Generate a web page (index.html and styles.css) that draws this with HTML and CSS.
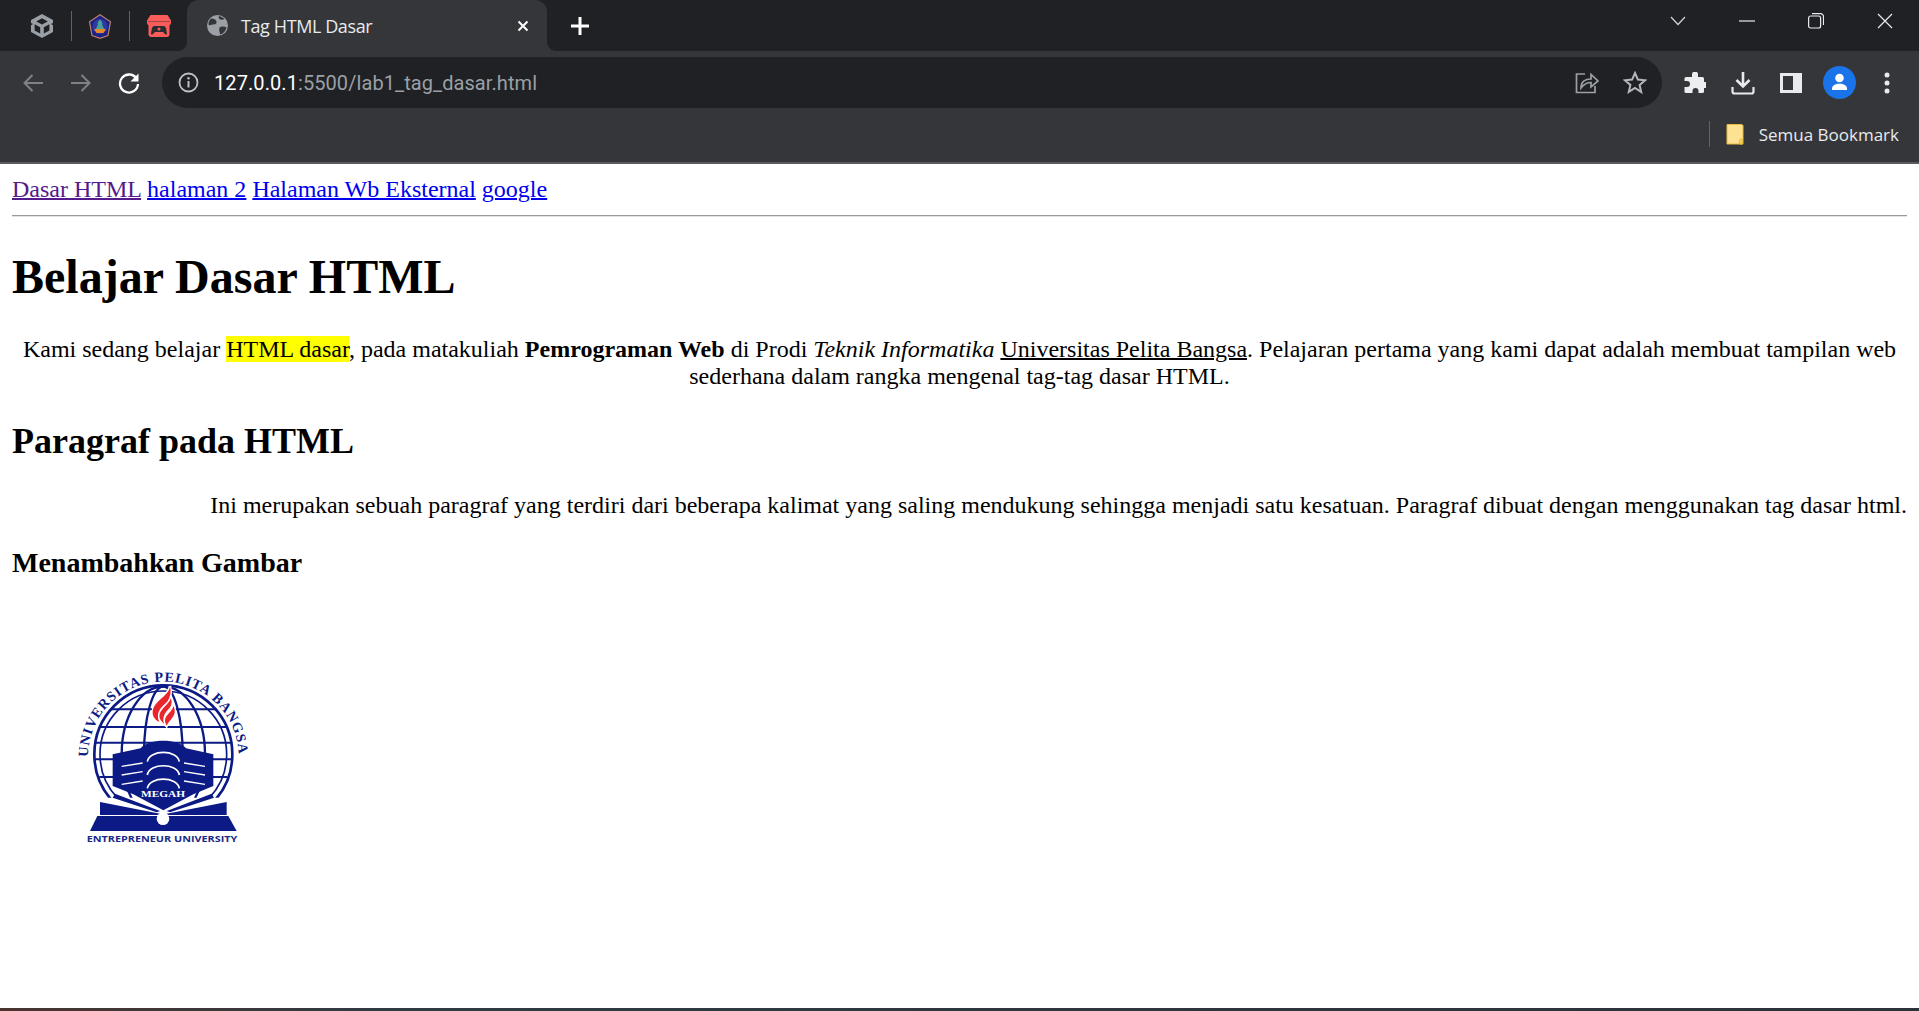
FILE: index.html

```html
<!DOCTYPE html>
<html lang="en">
<head>
    <meta charset="UTF-8">
    <title>Tag HTML Dasar</title>
    <link rel="stylesheet" href="styles.css">
</head>
<body>
<div class="window">
    <div class="tabstrip">
        <div class="pinned sep">
            <svg width="22" height="24" viewBox="0 0 22 24"><path d="M11 0l11 6v12l-11 6L0 18V6z" fill="#9aa0a6"/><path d="M11 4.200l5.800 3.200L11 10.600 5.200 7.400zM3.600 10.200l5.600 3.100v6.200l-5.600-3zM18.400 10.200v6.300l-5.600 3v-6.200z" fill="#202124"/><path d="M-1 8.500l3 1.500-3 2zM23 8.500l-3 1.500 3 2z" fill="#202124"/></svg>
        </div>
        <div class="pinned sep">
            <svg width="24" height="25" viewBox="0 0 24 25"><path d="M12 .7l10.500 7L20 21.500 12 24.300 4 21.500 1.500 7.700z" fill="#1c2186" stroke="#b9806c" stroke-width="1.200"/><circle cx="12" cy="12.500" r="7.500" fill="#2c3aa0"/><path d="M12 5.500c1.800 1.500 2.800 3.500 2.200 5.500l2 4H7.800l2-4C9.200 9 10.200 7 12 5.500z" fill="#4a9f98"/><path d="M6 15h12l-2.500 4h-7z" fill="#e8862a"/></svg>
        </div>
        <div class="pinned pinned-last">
            <svg width="24" height="22" viewBox="0 0 24 22"><path d="M3.500 0h17L24 5.500V8a2.500 2.500 0 0 1-1.500 2.200V19a3 3 0 0 1-3 3h-15a3 3 0 0 1-3-3v-8.800A2.500 2.500 0 0 1 0 8V5.500z" fill="#fa5c5c"/><path d="M1 6.500h22" stroke="#35272a" stroke-width=".8" opacity=".55"/><path d="M7.500 11h9c1.500 0 2.300 1 2.600 2.500l.9 5c.1 1-1 1.400-1.800.7L16 17H8l-2.200 2.200c-.8.700-1.900.3-1.800-.7l.9-5C5.200 12 6 11 7.500 11z" fill="#2b2d30"/><circle cx="12" cy="14" r="1.500" fill="#fa5c5c"/></svg>
        </div>
        <div class="tab">
            <svg class="tab-icon" width="21" height="21" viewBox="0 0 21 21"><circle cx="10.500" cy="10.500" r="10.500" fill="#9aa0a6"/><path d="M4 3.500c3 0 5 1 5.500 3S8 10 6 9.500 2 12 1.500 9C1.500 7 2.500 5 4 3.500zM13 12c2-1 5-.5 6.500.5-.5 3-3 6-6 7-1-2-2-5.500-.5-7.500zM12 1c2 .5 4 1.500 5.500 3-1.500 1-4 1-5 0S11.500 2 12 1z" fill="#35363a"/></svg>
            <span class="tab-title">Tag HTML Dasar</span>
            <svg class="tab-close" width="12" height="12" viewBox="0 0 12 12"><path d="M1.500 1.500l9 9M10.500 1.500l-9 9" stroke="#fff" stroke-width="2"/></svg>
        </div>
        <svg class="new-tab" width="18" height="18" viewBox="0 0 18 18"><path d="M9 0v18M0 9h18" stroke="#fff" stroke-width="3"/></svg>
        <div class="win-controls">
            <span class="win-btn"><svg width="16" height="10" viewBox="0 0 16 10"><path d="M1 1l7 7.500L15 1" fill="none" stroke="#d5d6d8" stroke-width="1.200"/></svg></span>
            <span class="win-btn"><svg width="16" height="2" viewBox="0 0 16 2"><path d="M0 1h16" stroke="#e8eaed" stroke-width="1.200"/></svg></span>
            <span class="win-btn"><svg width="16" height="16" viewBox="0 0 16 16"><rect x=".6" y="3" width="12" height="12" rx="2" fill="none" stroke="#e8eaed" stroke-width="1.200"/><path d="M4 .7h8.500a3 3 0 0 1 3 3V12" fill="none" stroke="#e8eaed" stroke-width="1.200"/></svg></span>
            <span class="win-btn"><svg width="16" height="16" viewBox="0 0 16 16"><path d="M1 1l14 14M15 1L1 15" stroke="#e8eaed" stroke-width="1.200"/></svg></span>
        </div>
    </div>

    <div class="toolbar">
        <span class="tool"><svg width="22" height="20" viewBox="0 0 22 20"><path d="M21 10H3M10.500 2l-8 8 8 8" fill="none" stroke="#7e8185" stroke-width="2"/></svg></span>
        <span class="tool"><svg width="22" height="20" viewBox="0 0 22 20"><path d="M1 10h18M11.500 2l8 8-8 8" fill="none" stroke="#7e8185" stroke-width="2"/></svg></span>
        <span class="tool"><svg width="22" height="22" viewBox="0 0 22 22"><path d="M18.500 6.500A9 9 0 1 0 20 12" fill="none" stroke="#fff" stroke-width="2.300"/><path d="M20.500 1.500v8h-8z" fill="#fff"/></svg></span>
        <div class="omnibox">
            <svg class="info" width="21" height="21" viewBox="0 0 21 21"><circle cx="10.500" cy="10.500" r="9" fill="none" stroke="#bdc1c6" stroke-width="1.800"/><path d="M10.500 9v6.500" stroke="#bdc1c6" stroke-width="2"/><circle cx="10.500" cy="6.300" r="1.200" fill="#bdc1c6"/></svg>
            <span class="url"><span class="host">127.0.0.1</span>:5500/lab1_tag_dasar.html</span>
            <span class="tool share"><svg width="24" height="23" viewBox="0 0 24 23"><path d="M10 3H1.500v18.500H20V15" fill="none" stroke="#9aa0a6" stroke-width="1.700"/><path d="M6 17c0-6 4-9 10-9V3.500l7 6.500-7 6v-4.500c-4 0-7 1.500-10 5.500z" fill="#202124" stroke="#9aa0a6" stroke-width="1.700"/></svg></span>
            <span class="tool"><svg width="24" height="23" viewBox="0 0 24 23"><path d="M12 2l2.900 6.600 7.100.7-5.400 4.700 1.600 7L12 16.900 5.800 20.900l1.600-7L2 9.300l7.100-.7z" fill="none" stroke="#b4b7ba" stroke-width="2"/></svg></span>
        </div>
        <span class="tool"><svg width="22" height="22" viewBox="0 0 22 22"><path d="M8 2.500a3 3 0 0 1 6 0V5h4.500A1.500 1.500 0 0 1 20 6.500V10h1.500a3 3 0 0 1 0 6H20v3.500a1.500 1.500 0 0 1-1.500 1.500H14.500v-2a3 3 0 0 0-6 0v2H2A1.500 1.500 0 0 1 .5 19.500V15H3a3 3 0 0 0 0-6H.5V6.500A1.500 1.500 0 0 1 2 5h6z" fill="#eceef0"/></svg></span>
        <span class="tool"><svg width="24" height="24" viewBox="0 0 24 24"><path d="M12 1v13M5.500 9l6.500 6.500L18.500 9" fill="none" stroke="#e8eaed" stroke-width="2.600"/><path d="M1.500 16v4.500a2 2 0 0 0 2 2h17a2 2 0 0 0 2-2V16" fill="none" stroke="#e8eaed" stroke-width="2.200"/></svg></span>
        <span class="tool"><svg width="22" height="20" viewBox="0 0 22 20"><rect width="22" height="20" fill="#e8eaed"/><rect x="3" y="3" width="10" height="14" fill="#35363a"/></svg></span>
        <span class="tool"><span class="avatar"><svg width="19" height="19" viewBox="0 0 19 19"><circle cx="9.500" cy="5" r="4.300" fill="#fff"/><path d="M2 15.500c0-3 3.500-4.800 7.500-4.800s7.500 1.800 7.500 4.800V17H2z" fill="#fff"/></svg></span></span>
        <span class="tool"><svg width="6" height="22" viewBox="0 0 6 22"><circle cx="3" cy="3" r="2.500" fill="#e8eaed"/><circle cx="3" cy="11" r="2.500" fill="#e8eaed"/><circle cx="3" cy="19" r="2.500" fill="#e8eaed"/></svg></span>
    </div>

    <div class="bookmarks">
        <span class="bm-sep"></span>
        <svg class="bm-folder" width="18" height="21" viewBox="0 0 18 21"><path d="M1 .5h15l1 1V20H1z" fill="#fde293" stroke="#e9b93a"/><path d="M13.500 20v-3.500a1 1 0 0 1 3 0V20z" fill="#f5cf5f" stroke="#e9b93a"/></svg>
        <span class="bm-label">Semua Bookmark</span>
    </div>

    <div class="page">
        <div class="nav-links">
            <a class="visited" href="#">Dasar HTML</a>
            <a href="#">halaman 2</a>
            <a href="#">Halaman Wb Eksternal</a>
            <a href="#">google</a>
        </div>
        <div class="rule"></div>
        <h1 class="title">Belajar Dasar HTML</h1>
        <p class="para center">Kami sedang belajar <span class="hilite">HTML dasar</span>, pada matakuliah <b>Pemrograman Web</b> di Prodi <i>Teknik Informatika</i> <u class="under">Universitas Pelita Bangsa</u>. Pelajaran pertama yang kami dapat adalah membuat tampilan web sederhana dalam rangka mengenal tag-tag dasar HTML.</p>
        <h2 class="subtitle">Paragraf pada HTML</h2>
        <p class="para right">Ini merupakan sebuah paragraf yang terdiri dari beberapa kalimat yang saling mendukung sehingga menjadi satu kesatuan. Paragraf dibuat dengan menggunakan tag dasar html.</p>
        <h3 class="minor">Menambahkan Gambar</h3>
        <svg class="logo" width="300" height="300" viewBox="0 0 900 900">
            <g transform="translate(144 132)">
                <defs>
                    <clipPath id="globeClip"><rect x="90" y="90" width="440" height="350"/></clipPath>
                </defs>
                <path id="arc" d="M84 318A226 226 0 0 1 536 318" fill="none"/>
                <text class="logo-arc" fill="#0b1a85"><textPath href="#arc" textLength="700">UNIVERSITAS PELITA BANGSA</textPath></text>
                <g clip-path="url(#globeClip)" fill="none" stroke="#0b1a85">
                    <circle cx="310" cy="310" r="207" stroke-width="8"/>
                    <circle cx="310" cy="310" r="190" stroke-width="5"/>
                    <ellipse cx="310" cy="310" rx="125" ry="203" stroke-width="7"/>
                    <ellipse cx="310" cy="310" rx="58" ry="203" stroke-width="7"/>
                    <path d="M150 175H470M118 228H502M103 275H517M103 325H517M118 378H502" stroke-width="6"/>
                </g>
                <g transform="translate(210 90)" fill="#e8262c" stroke="#fff" stroke-width="8" paint-order="stroke">
                    <path d="M120 15C118 45 70 60 68 92 67 108 78 118 88 122 78 100 88 82 108 66 122 54 124 35 120 15z"/>
                    <path d="M122 52C118 70 88 85 88 105 88 115 95 122 102 128 96 108 105 95 118 82 126 73 127 62 122 52z"/>
                    <path d="M130 75C128 92 106 100 105 118 105 125 108 130 110 134 116 120 130 112 134 95 135 87 133 80 130 75z"/>
                </g>
                <path d="M158 310L242 292C265 262 355 262 378 292L460 310V405L400 430 310 478 220 430 158 405z" fill="#0b1a85"/>
                <path d="M262 332C268 295 352 295 358 332M262 372C268 335 352 335 358 372M262 412C268 375 352 375 358 412" fill="none" stroke="#fff" stroke-width="5"/>
                <path d="M185 346L248 336M185 372L248 362M185 400L248 390M435 346L372 336M435 372L372 362M435 400L372 390" stroke="#fff" stroke-width="4"/>
                <text class="logo-megah" x="243" y="438" textLength="132" lengthAdjust="spacingAndGlyphs" fill="#fff">MEGAH</text>
                <path d="M165 428L300 480 290 484 158 440zM455 428L320 480 330 484 462 440z" fill="#0b1a85"/>
                <path d="M120 453L300 488V492H120zM500 453L320 488V492H500z" fill="#0b1a85"/>
                <path d="M112 495H505L530 540H90z" fill="#0b1a85"/>
                <circle cx="309" cy="503" r="19" fill="#fff"/>
                <text class="logo-motto" x="80" y="573" textLength="452" lengthAdjust="spacingAndGlyphs" fill="#1b2a85">ENTREPRENEUR UNIVERSITY</text>
            </g>
        </svg>
    </div>
    <div class="taskbar-edge"></div>
</div>
</body>
</html>
```

FILE: styles.css

```css
html, body { margin: 0; padding: 0; height: 100%; overflow: hidden; background: #fff; }
.window { display: flex; flex-direction: column; height: 1011px; }

/* browser chrome */
.tabstrip { display: flex; align-items: flex-end; height: 51px; padding-left: 13px; background: #202124; flex-shrink: 0; }
.pinned { display: flex; align-items: center; justify-content: center; width: 58.500px; height: 30px; margin-bottom: 10px; box-sizing: border-box; }
.pinned.sep { border-right: 1px solid #5f6368; }
.pinned-last { width: 57px; }
.tab { position: relative; display: flex; align-items: center; width: 360px; height: 51px; box-sizing: border-box; padding: 0 18px 0 20px; background: #35363a; border-radius: 12px 12px 0 0; }
.tab::before, .tab::after { content: ""; position: absolute; bottom: 0; width: 10px; height: 10px; }
.tab::before { left: -10px; background: radial-gradient(circle at 0 0, #202124 10px, #35363a 10.500px); }
.tab::after { right: -10px; background: radial-gradient(circle at 100% 0, #202124 10px, #35363a 10.500px); }
.tab-title { margin-left: 13px; color: #e8eaed; font: 18px "Open Sans", sans-serif; letter-spacing: -0.4px; }
.tab-close { margin-left: auto; }
.new-tab { align-self: center; margin-left: 24px; }
.win-controls { display: flex; margin-left: auto; align-self: flex-start; }
.win-btn { display: flex; align-items: center; justify-content: center; width: 69px; height: 42px; }

.toolbar { display: flex; align-items: center; height: 57px; padding: 6px 8px 0 9px; box-sizing: border-box; background: #35363a; flex-shrink: 0; }
.tool { display: flex; align-items: center; justify-content: center; width: 48px; height: 48px; flex-shrink: 0; }
.omnibox { display: flex; align-items: center; flex: 1; height: 51px; margin: 0 9px; padding: 0 3px 0 16px; background: #202124; border-radius: 26px; }
.info { flex-shrink: 0; }
.url { flex: 1; margin-left: 15px; color: #9aa0a6; font: 20px Roboto, sans-serif; letter-spacing: .08px; }
.host { color: #fff; }
.avatar { display: flex; align-items: center; justify-content: center; width: 33px; height: 33px; border-radius: 50%; background: #1a73e8; }

.bookmarks { display: flex; align-items: center; justify-content: flex-end; height: 56px; padding: 0 20px 2px 0; box-sizing: border-box; background: #35363a; border-bottom: 2px solid #5a5b5e; flex-shrink: 0; }
.bm-sep { width: 1px; height: 26px; background: #5f6368; }
.bm-folder { margin-left: 16px; }
.bm-label { margin-left: 15px; color: #e8eaed; font: 17px "Open Sans", sans-serif; }

/* the page itself, default styles at 150% zoom */
.page { flex: 1; overflow: hidden; padding: 12px; color: #000; font: 24px "Liberation Serif", serif; }
.nav-links a { color: #00e; text-decoration-thickness: 2px; }
.nav-links a.visited { color: #551a8b; }
.rule { margin: 12px 0; border-top: 1px solid #9a9a9a; border-bottom: 1px solid #e4e4e4; }
.title { margin: 32px 0; font-size: 48px; }
.para { margin: 32px 0 0; }
.center { text-align: center; }
.right { text-align: right; margin-top: 30px; }
.hilite { background: #ff0; }
.under { text-decoration-thickness: 2px; }
.subtitle { margin: 30px 0 0; font-size: 36px; }
.minor { margin: 28px 0; font-size: 28px; }
.logo { display: block; }
.logo-arc { font: bold 42px "Liberation Serif", serif; }
.logo-megah { font: bold 24px "Liberation Serif", serif; }
.logo-motto { font: bold 26px "Open Sans", sans-serif; }
.taskbar-edge { height: 3px; background: linear-gradient(90deg, #4a3430, #2f3a42 20%, #2c3238); flex-shrink: 0; }
```
